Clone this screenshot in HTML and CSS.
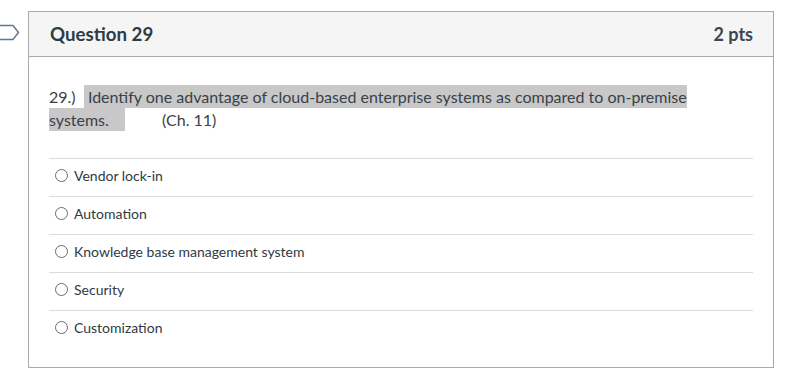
FILE: index.html
```html
<!DOCTYPE html>
<html lang="en">
<head>
    <meta charset="UTF-8">
    <title>Question 29</title>
    <link rel="stylesheet" href="styles.css">
</head>
<body>
    <div class="page">
        <svg class="flag" width="20" height="17" viewBox="0 0 20 17">
            <path d="M-4 1.5 H13 L18.5 8.5 L13 15.5 H-4" fill="none" stroke="#5b7a94" stroke-width="1.4" stroke-linejoin="round"/>
        </svg>
        <div class="question">
            <div class="header">
                <span class="title">Question 29</span>
                <span class="pts">2 pts</span>
            </div>
            <div class="body">
                <p class="text">29.)&nbsp; <span class="hl">&nbsp;Identify one advantage of cloud-based enterprise systems as compared to on-premise systems.&nbsp;&nbsp;&nbsp;&nbsp;</span>&nbsp;&nbsp;&nbsp;&nbsp;&nbsp;&nbsp;&nbsp;&nbsp; (Ch. 11)</p>
                <div class="answers">
                    <label class="answer"><span class="radio"></span>Vendor lock-in</label>
                    <label class="answer"><span class="radio"></span>Automation</label>
                    <label class="answer"><span class="radio"></span>Knowledge base management system</label>
                    <label class="answer"><span class="radio"></span>Security</label>
                    <label class="answer"><span class="radio"></span>Customization</label>
                </div>
            </div>
        </div>
    </div>
</body>
</html>
```
FILE: styles.css
```css
body{
    margin: 0;
    background: #fff;
    font-family: Lato, "Open Sans", sans-serif;
    color: #2d3b45;
}
.page{
    display: flex;
    align-items: flex-start;
    padding-top: 11px;
}
.flag{
    margin-top: 13px;
    margin-right: 8px;
    flex: none;
}
.question{
    width: 744px;
    border: 1px solid #a9a9a9;
}
.header{
    display: flex;
    justify-content: space-between;
    align-items: center;
    height: 44px;
    padding: 0 20px 0 21px;
    background: #f5f5f5;
    border-bottom: 1px solid #a9a9a9;
}
.title{
    font-size: 18.7px;
    font-weight: bold;
}
.pts{
    font-size: 18px;
    font-weight: bold;
    color: #3c4650;
}
.body{
    padding: 28px 20px 19px 20px;
}
.text{
    margin: 0 0 27px 0;
    font-size: 16px;
    line-height: 23px;
    color: #3a4148;
}
.hl{
    background: #c8c8c8;
    padding: 2px 0;
}
.answers{
    display: flex;
    flex-direction: column;
}
.answer{
    display: flex;
    align-items: center;
    box-sizing: border-box;
    height: 38px;
    padding-bottom: 4px;
    border-top: 1px solid #dcdcdc;
    font-size: 14px;
    color: #2d3b45;
    padding-left: 6px;
}
.radio{
    width: 11px;
    height: 11px;
    border: 1px solid #6b6b6b;
    border-radius: 50%;
    margin-right: 6px;
}
```
